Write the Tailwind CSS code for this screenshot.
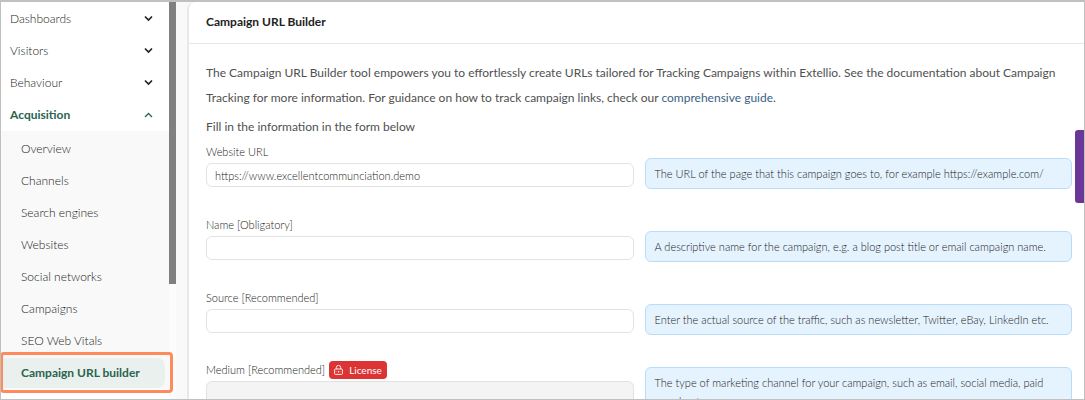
<!DOCTYPE html>
<html lang="en">
<head>
  <meta charset="UTF-8" />
  <meta name="viewport" content="width=device-width, initial-scale=1.0" />
  <title>Campaign URL Builder</title>
  <script src="https://cdn.jsdelivr.net/npm/@tailwindcss/browser@4"></script>
</head>
<body class="font-[Lato,'Noto_Sans',sans-serif] text-[#222]">
  <div class="relative flex h-screen overflow-hidden border border-t-2 border-[#c0c0c0] bg-[#f9f9f9]">

    <!-- Sidebar -->
    <aside class="w-[168px] shrink-0 bg-white text-[12px] font-light">
      <nav class="pt-px">
        <button class="flex h-8 w-full items-center justify-between pr-4 pl-[9px]">Dashboards
          <svg class="size-[9px] text-[#222]" viewBox="0 0 9 9" fill="none" stroke="currentColor" stroke-width="1.7"><path d="M1 1.5 4.5 5 8 1.5" /></svg>
        </button>
        <button class="flex h-8 w-full items-center justify-between pr-4 pl-[9px]">Visitors
          <svg class="size-[9px] text-[#222]" viewBox="0 0 9 9" fill="none" stroke="currentColor" stroke-width="1.7"><path d="M1 1.5 4.5 5 8 1.5" /></svg>
        </button>
        <button class="flex h-8 w-full items-center justify-between pr-4 pl-[9px]">Behaviour
          <svg class="size-[9px] text-[#222]" viewBox="0 0 9 9" fill="none" stroke="currentColor" stroke-width="1.7"><path d="M1 1.5 4.5 5 8 1.5" /></svg>
        </button>
        <button class="flex h-8 w-full items-center justify-between pr-4 pl-[9px] font-bold text-[#2a6350]">Acquisition
          <svg class="size-[9px]" viewBox="0 0 9 9" fill="none" stroke="currentColor" stroke-width="1.3"><path d="M1 6 4.5 2.5 8 6" /></svg>
        </button>
        <div class="flex flex-col bg-[#f9f9f9] pt-[2px]">
          <a href="#" class="flex h-8 items-center pl-5">Overview</a>
          <a href="#" class="flex h-8 items-center pl-5">Channels</a>
          <a href="#" class="flex h-8 items-center pl-5">Search engines</a>
          <a href="#" class="flex h-8 items-center pl-5">Websites</a>
          <a href="#" class="flex h-8 items-center pl-5">Social networks</a>
          <a href="#" class="flex h-8 items-center pl-5">Campaigns</a>
          <a href="#" class="flex h-8 items-center pl-5">SEO Web Vitals</a>
          <a href="#" class="relative mr-1 flex h-8 items-center pl-5 font-bold text-[#2a6350]">
            <span class="absolute inset-y-px left-0 right-0 rounded-r-lg bg-[#eaf0ee]"></span>
            <span class="relative">Campaign URL builder</span>
          </a>
        </div>
      </nav>
    </aside>
    <div class="w-[7px] shrink-0 bg-[#fcfcfc]">
      <div class="h-[282px] bg-[#808080]"></div>
    </div>
    <div class="absolute -left-px top-[350px] h-[41px] w-[173px] rounded-[4px] border-3 border-[#ff8a5b]"></div>

    <!-- Content -->
    <main class="ml-[11px] min-w-0 flex-1 rounded-tl-lg border-l-2 border-[#e8e8e8] bg-white">
      <h1 class="flex h-[42px] items-center border-b border-[#e8e8e8] pb-[2px] pl-[17px] text-[12px] font-bold">Campaign URL Builder</h1>
      <div class="pt-4 pr-3 pl-[17px]">
        <p class="text-[12px] leading-[25px] text-[#505050]">The Campaign URL Builder tool empowers you to effortlessly create URLs tailored for Tracking Campaigns within Extellio. See the documentation about Campaign Tracking for more information. For guidance on how to track campaign links, check our <a href="#" class="text-[#3a5f85]">comprehensive guide</a>.</p>
        <p class="mt-1 text-[12px] leading-[25px] text-[#505050]">Fill in the information in the form below</p>

        <form class="mt-1 text-[11px] font-light">
          <div class="grid h-[73px] grid-cols-2 gap-[11px]">
            <div>
              <label for="url" class="flex h-[18px] items-center">Website URL</label>
              <input id="url" type="text" value="https://www.excellentcommunciation.demo" class="mt-[2px] block h-6 w-full rounded-md border border-[#e2e2e2] px-2" />
            </div>
            <p class="mt-[15px] self-start rounded-md border border-[#b9dcfb] bg-[#e5f3ff] px-[9px] py-[5px] leading-[19px]">The URL of the page that this campaign goes to, for example https://example.com/</p>
          </div>
          <div class="grid h-[73px] grid-cols-2 gap-[11px]">
            <div>
              <label for="name" class="flex h-[18px] items-center">Name [Obligatory]</label>
              <input id="name" type="text" class="mt-[2px] block h-6 w-full rounded-md border border-[#e2e2e2] px-2" />
            </div>
            <p class="mt-[15px] self-start rounded-md border border-[#b9dcfb] bg-[#e5f3ff] px-[9px] py-[5px] leading-[19px]">A descriptive name for the campaign, e.g. a blog post title or email campaign name.</p>
          </div>
          <div class="grid h-[72px] grid-cols-2 gap-[11px]">
            <div>
              <label for="source" class="flex h-[18px] items-center">Source [Recommended]</label>
              <input id="source" type="text" class="mt-[2px] block h-6 w-full rounded-md border border-[#e2e2e2] px-2" />
            </div>
            <p class="mt-[15px] self-start rounded-md border border-[#b9dcfb] bg-[#e5f3ff] px-[9px] py-[5px] leading-[19px]">Enter the actual source of the traffic, such as newsletter, Twitter, eBay, LinkedIn etc.</p>
          </div>
          <div class="grid grid-cols-2 gap-[11px]">
            <div>
              <div class="flex h-[18px] items-center gap-1">
                <label for="medium">Medium [Recommended]</label>
                <span class="flex h-[18px] items-center gap-[6px] rounded-[4px] bg-[#dc3434] px-[5px] text-[10px] font-normal text-white">
                  <svg class="h-[10px] w-[9px]" viewBox="0 0 9 10" fill="none" stroke="currentColor" stroke-width="0.9"><rect x="0.6" y="4" width="7.8" height="5.4" rx="0.8" /><path d="M2.3 4V2.6a2.2 2.2 0 0 1 4.4 0V4M4.5 6v1.5M2.7 6.8h.5M5.8 6.8h.5" /></svg>
                  License
                </span>
              </div>
              <input id="medium" type="text" disabled class="mt-[2px] block h-6 w-full rounded-md border border-[#e2e2e2] bg-[#f4f4f4] px-2" />
            </div>
            <p class="mt-[6px] self-start rounded-md border border-[#b9dcfb] bg-[#e5f3ff] px-[9px] py-[5px] leading-[19px]">The type of marketing channel for your campaign, such as email, social media, paid search, etc.</p>
          </div>
        </form>
      </div>
    </main>
    <button aria-label="Feedback" class="absolute right-0 top-32 h-[73px] w-[9px] rounded-l-[3px] bg-[#6a3799]"></button>
  </div>
</body>
</html>
